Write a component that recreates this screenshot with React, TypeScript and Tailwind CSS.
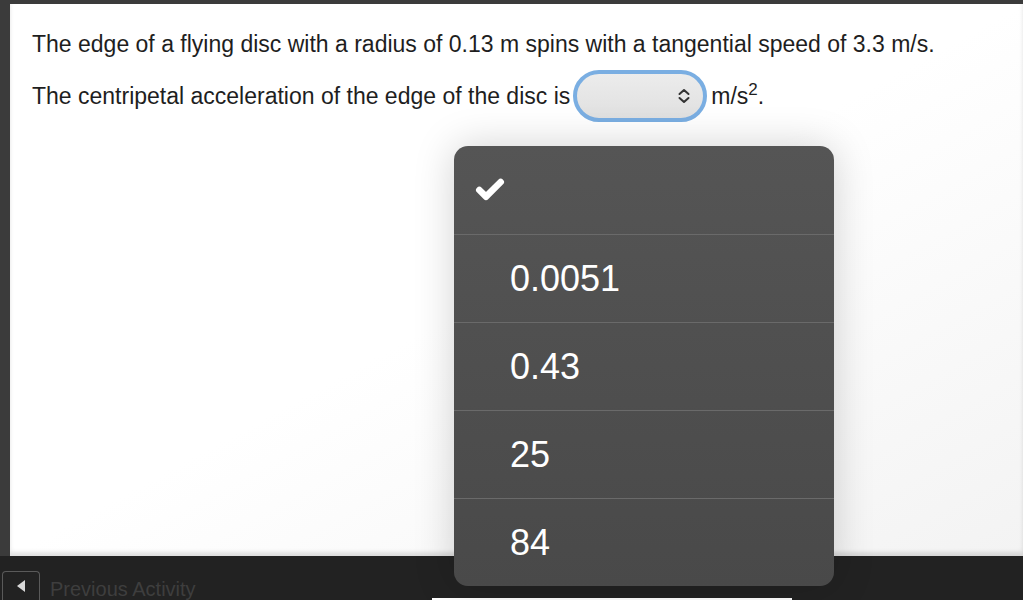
import { Check } from "lucide-react";

const OPTIONS = ["0.0051", "0.43", "25", "84"];

function SelectArrows() {
  return (
    <svg width="14" height="16" viewBox="0 0 14 16" fill="none" stroke="#333" strokeWidth="2" strokeLinecap="round" strokeLinejoin="round">
      <path d="M2.5 6 L7 2 L11.5 6" />
      <path d="M2.5 10 L7 14 L11.5 10" />
    </svg>
  );
}

function OptionMenu() {
  return (
    <div className="absolute left-[454px] top-[146px] w-[380px] rounded-[14px] overflow-hidden bg-gradient-to-b from-[#555555] to-[#494949] shadow-[0_0_40px_rgba(0,0,0,0.18)]">
      <div className="h-[88px] flex items-center pl-[20px]">
        <Check className="w-[32px] h-[32px] text-white" strokeWidth={5} />
      </div>
      {OPTIONS.map((o) => (
        <div key={o} className="h-[88px] border-t border-[#6a6a6a] flex items-center pl-[56px] text-white text-[36px]">
          {o}
        </div>
      ))}
    </div>
  );
}

export default function App() {
  return (
    <div className="relative w-[1023px] h-[600px] overflow-hidden bg-[#3b3b3b] font-['Liberation_Sans',Arial,sans-serif]">
      <div className="flex flex-col h-full pt-[4px]">
        <div className="flex-1 ml-[10px] bg-gradient-to-br from-white via-white to-[#f3f3f3] shadow-[inset_0_-4px_4px_rgba(0,0,0,0.12)] pl-[22px] pt-[24px] text-[#1e1e1e] text-[23px]">
          <p className="leading-[32px]">
            The edge of a flying disc with a radius of 0.13 m spins with a tangential speed of 3.3 m/s.
          </p>
          <div className="flex items-center mt-[10px]">
            <span>The centripetal acceleration of the edge of the disc is</span>
            <div className="ml-[3px] w-[134px] h-[52px] rounded-full border-[4px] border-[#7aaee2] bg-gradient-to-b from-[#ececec] to-[#e0e0e0] flex items-center justify-end pr-[12px]">
              <SelectArrows />
            </div>
            <span className="ml-[4px]">
              m/s<sup className="text-[17px]">2</sup>.
            </span>
          </div>
        </div>
        <div className="h-[44px] bg-[#222222] flex items-end">
          <div className="ml-[2px] w-[38px] h-[29px] rounded-t-[4px] border border-b-0 border-[#5a5a5a] flex items-center justify-center">
            <svg width="10" height="14" viewBox="0 0 10 14">
              <path d="M9 1 L1 7 L9 13 Z" fill="#d8d8d8" />
            </svg>
          </div>
          <span className="ml-[10px] mb-[1px] text-[20px] text-[#3e3e3e] leading-none">Previous Activity</span>
          <div className="ml-[236px] w-[360px] h-[2px] bg-white" />
        </div>
      </div>
      <OptionMenu />
    </div>
  );
}
